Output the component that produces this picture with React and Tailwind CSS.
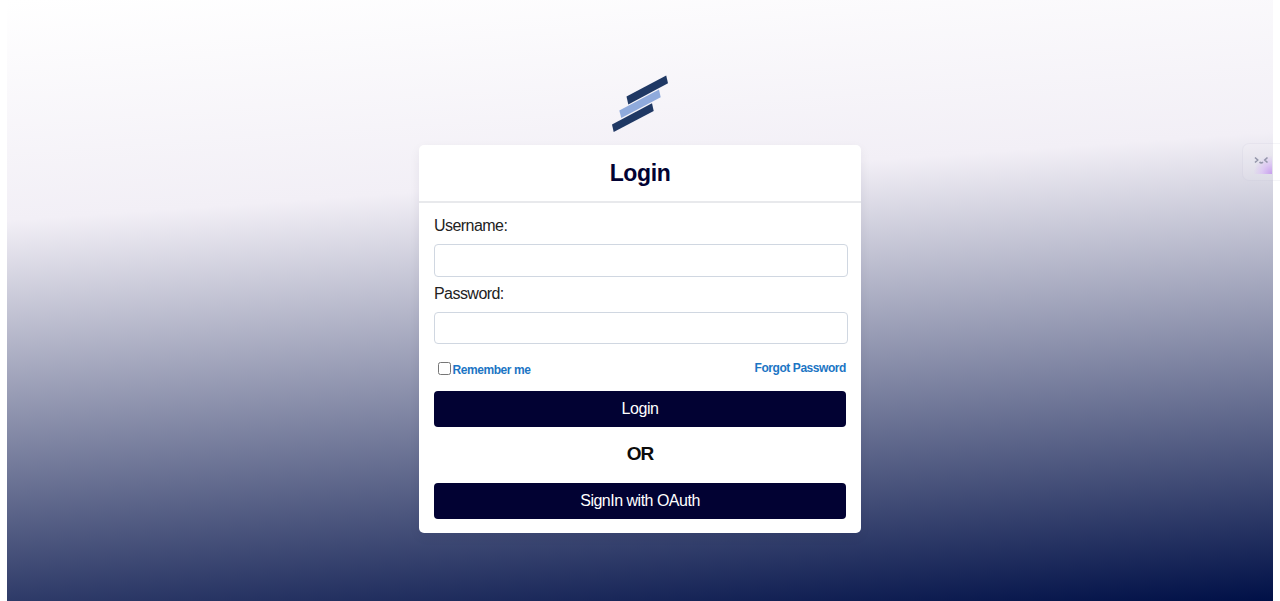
import React, { useState } from 'react';

const Logo = () => (
  <svg width="58" height="60" viewBox="0 0 58 60" aria-hidden="true">
    <path d="M15.5 21.5 55.2 .5 57 8.3 17.3 29.5z" fill="#1f3864" />
    <path d="M8.3 35.5 48 14.5 49.7 22.3 10.3 43z" fill="#8faadc" />
    <path d="M1 49.5 41 28.3 42.7 36 2.7 57z" fill="#1f3864" />
  </svg>
);

const Field = ({ label, name, type, value, onChange, inputHeight }) => (
  <div>
    <label htmlFor={name} className="block h-[25px] leading-6 text-base tracking-[-0.55px] text-[#222222]">
      {label}
    </label>
    <input
      id={name}
      name={name}
      type={type}
      value={value}
      onChange={onChange}
      className={`block mt-[5px] w-[414px] rounded-[4px] border border-[#d0d7e1] bg-white px-2 text-sm outline-none ${inputHeight}`}
    />
  </div>
);

const Button = ({ children, className = '' }) => (
  <button
    type="button"
    className={`block h-[36px] w-full rounded-[4px] bg-[#020233] pb-px text-base text-white ${className}`}
  >
    {children}
  </button>
);

const App = () => {
  const [form, setForm] = useState({ username: '', password: '', remember: false });

  const onChange = (name, value) => setForm(prev => ({ ...prev, [name]: value }));

  return (
    <div className="relative h-screen overflow-hidden bg-white px-[7px] font-['Liberation_Sans',Arial,sans-serif]">
      <main className="flex h-full flex-col items-center bg-[linear-gradient(176deg,#ffffff_0%,#f2eff6_32%,#001047_100%)] pt-[75px]">
        <Logo />

        <section className="mt-[10px] h-[388px] w-[442px] rounded-[5px] bg-white shadow-[0_4px_12px_rgba(0,0,50,0.06)]">
          <h1 className="h-[58px] border-b-2 border-[#e8e9ec] text-center text-[23px] leading-[57px] font-bold tracking-[-0.4px] text-[#020233]">
            Login
          </h1>

          <form className="px-[15px] pt-[11px]">
            <Field
              label="Username:"
              name="username"
              type="text"
              value={form.username}
              onChange={(e) => onChange('username', e.target.value)}
              inputHeight="h-[33px]"
            />
            <div className="h-[5px]" />
            <Field
              label="Password:"
              name="password"
              type="password"
              value={form.password}
              onChange={(e) => onChange('password', e.target.value)}
              inputHeight="h-[32px]"
            />

            <div className="mt-[15px] flex h-[32px] items-start justify-between text-[12px] leading-[18px] font-bold tracking-[-0.44px] text-[#1c75c4]">
              <label className="flex items-start pl-[4px]">
                <input
                  type="checkbox"
                  checked={form.remember}
                  onChange={(e) => onChange('remember', e.target.checked)}
                  className="mt-[3px] mr-[1.5px] size-[13px]"
                />
                <span className="pt-[2px]">Remember me</span>
              </label>
              <a href="#forgot">Forgot Password</a>
            </div>

            <Button className="tracking-[-0.4px]">Login</Button>
            <p className="h-[56px] text-center text-[19px] leading-[53px] font-bold tracking-[-1px] text-[#0c0c0c]">OR</p>
            <Button className="tracking-[-0.5px]">SignIn with OAuth</Button>
          </form>
        </section>
      </main>

      {/* side widget, partly off the right edge */}
      <div className="absolute top-[143px] right-[-8px] h-[38px] w-[46px] rounded-[7px] border border-[#8080a0]/8 bg-white/10">
        <div className="mt-[5px] ml-[6px] h-[25px] w-[23px] bg-[radial-gradient(circle_at_100%_100%,#c79eed_0%,#ddc9f2_30%,transparent_55%)]">
          <svg width="23" height="25" viewBox="0 0 23 25" fill="none" stroke="#9496aa" strokeWidth="1.6" aria-hidden="true">
            <path d="M6 8.5 8.7 11 6 13.5M18.5 8.5 15.8 11 18.5 13.5M10.5 13.2Q12.2 14.6 14 13.2" />
          </svg>
        </div>
      </div>
    </div>
  );
};

export default App;
